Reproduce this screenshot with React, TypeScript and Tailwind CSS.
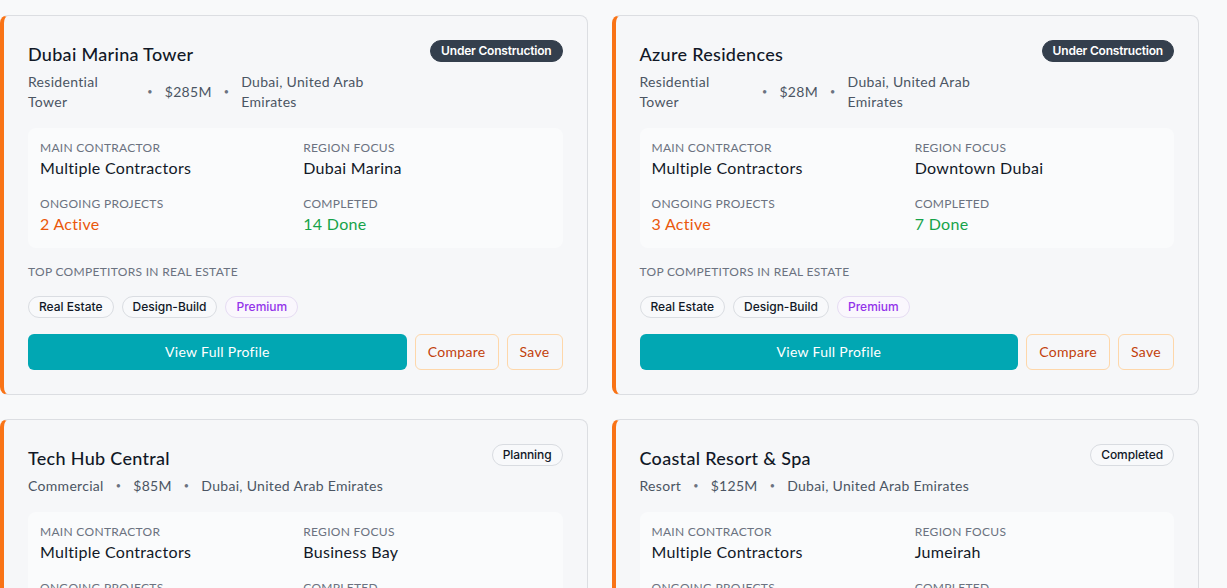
import React from 'react';

interface Project {
  name: string;
  status: 'Under Construction' | 'Planning' | 'Completed';
  type: string;
  budget: string;
  location: string;
  contractor: string;
  region: string;
  active: number;
  done: number;
}

const projects: Project[] = [
  {
    name: 'Dubai Marina Tower',
    status: 'Under Construction',
    type: 'Residential Tower',
    budget: '$285M',
    location: 'Dubai, United Arab Emirates',
    contractor: 'Multiple Contractors',
    region: 'Dubai Marina',
    active: 2,
    done: 14,
  },
  {
    name: 'Azure Residences',
    status: 'Under Construction',
    type: 'Residential Tower',
    budget: '$28M',
    location: 'Dubai, United Arab Emirates',
    contractor: 'Multiple Contractors',
    region: 'Downtown Dubai',
    active: 3,
    done: 7,
  },
  {
    name: 'Tech Hub Central',
    status: 'Planning',
    type: 'Commercial',
    budget: '$85M',
    location: 'Dubai, United Arab Emirates',
    contractor: 'Multiple Contractors',
    region: 'Business Bay',
    active: 1,
    done: 9,
  },
  {
    name: 'Coastal Resort & Spa',
    status: 'Completed',
    type: 'Resort',
    budget: '$125M',
    location: 'Dubai, United Arab Emirates',
    contractor: 'Multiple Contractors',
    region: 'Jumeirah',
    active: 0,
    done: 21,
  },
];

const StatusBadge: React.FC<{ status: Project['status'] }> = ({ status }) => {
  const dark = status === 'Under Construction';
  return (
    <span
      className={
        dark
          ? 'shrink-0 whitespace-nowrap rounded-full border border-[#343f4d] bg-[#343f4d] px-2.5 py-0.5 font-["Inter",sans-serif] text-xs font-semibold leading-4 tracking-[-0.2px] text-white'
          : 'shrink-0 whitespace-nowrap rounded-full border border-[#d9dce1] bg-[#f8f9fb] px-2.5 py-0.5 font-["Inter",sans-serif] text-xs font-medium leading-4 tracking-[-0.1px] text-[#111827]'
      }
    >
      {status}
    </span>
  );
};

const Dot = () => <span className="text-[9px] text-[#6b7280]">•</span>;

const ProjectCard: React.FC<{ project: Project }> = ({ project }) => (
  <div className="rounded-lg border border-[#dcdee2] border-l-4 border-l-[#f97316] bg-[#f6f7f9] p-6">
    <div className="flex items-start justify-between gap-4">
      <div className="min-w-0">
        <h3 className="text-lg font-medium leading-7 text-[#111827]">{project.name}</h3>
        <div className="mt-1 flex items-center gap-3 text-sm leading-5 text-[#4b5563]">
          <span>{project.type}</span>
          <Dot />
          <span>{project.budget}</span>
          <Dot />
          <span>{project.location}</span>
        </div>
      </div>
      <StatusBadge status={project.status} />
    </div>

    <div className="mt-4 grid grid-cols-2 gap-x-4 gap-y-4 rounded-lg bg-[#fafbfc] p-3">
      <div>
        <p className="text-xs uppercase leading-4 text-[#6b7280]">Main Contractor</p>
        <p className="text-base leading-6 text-[#111827]">{project.contractor}</p>
      </div>
      <div>
        <p className="text-xs uppercase leading-4 text-[#6b7280]">Region Focus</p>
        <p className="text-base leading-6 text-[#111827]">{project.region}</p>
      </div>
      <div>
        <p className="text-xs uppercase leading-4 text-[#6b7280]">Ongoing Projects</p>
        <p className="text-base leading-6 text-[#ea580c]">{project.active} Active</p>
      </div>
      <div>
        <p className="text-xs uppercase leading-4 text-[#6b7280]">Completed</p>
        <p className="text-base leading-6 text-[#16a34a]">{project.done} Done</p>
      </div>
    </div>

    <p className="mt-4 text-xs uppercase leading-4 text-[#6b7280]">Top Competitors in Real Estate</p>
    <div className="mt-4 flex flex-wrap gap-2 font-['Inter',sans-serif] text-xs font-medium leading-4 tracking-normal">
      <span className="rounded-full border border-[#dadde2] bg-[#f8f9fb] px-2.5 py-0.5 text-[#111827]">Real Estate</span>
      <span className="rounded-full border border-[#dadde2] bg-[#f8f9fb] px-2.5 py-0.5 text-[#111827]">Design-Build</span>
      <span className="rounded-full border border-[#e6dcf3] bg-[#faf7fd] px-2.5 py-0.5 text-[#9333ea]">Premium</span>
    </div>

    <div className="mt-4 flex gap-2 text-sm">
      <button className="h-9 flex-1 rounded-md bg-[#01a7b3] text-white">View Full Profile</button>
      <button className="h-9 rounded-md border border-[#fed7aa] px-3 text-[#c2410c]">Compare</button>
      <button className="h-9 rounded-md border border-[#fed7aa] px-3 text-[#c2410c]">Save</button>
    </div>
  </div>
);

export default function App() {
  return (
    <div className="min-h-screen bg-[#f8f9fa] pr-[28px] pt-[15px] font-['Lato',sans-serif] tracking-[0.3px]">
      <div className="grid grid-cols-2 gap-6">
        {projects.map((p) => (
          <ProjectCard key={p.name} project={p} />
        ))}
      </div>
    </div>
  );
}
